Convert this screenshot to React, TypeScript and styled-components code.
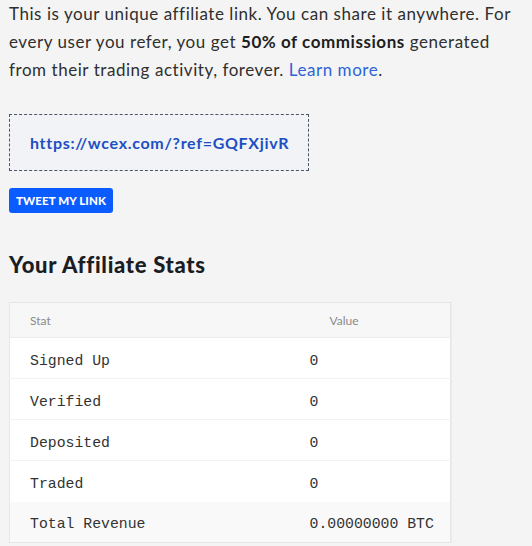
import React from 'react';
import styled, { createGlobalStyle } from 'styled-components';

const GlobalStyle = createGlobalStyle`
  html, body {
    margin: 0;
    padding: 0;
    background: #f4f4f4;
  }
  body {
    font-family: Lato, "Open Sans", sans-serif;
    color: #2b2b2b;
  }
`;

const Page = styled.div`
  padding: 0 9px;
`;

const Intro = styled.p`
  margin: 0;
  font-size: 17px;
  line-height: 28px;
  letter-spacing: 0.55px;
  color: #2f2f2f;

  strong {
    font-weight: 700;
    color: #1e1e1e;
  }
`;

const Learn = styled.a`
  color: #2d63d6;
  text-decoration: none;
`;

const LinkBox = styled.div`
  margin-top: 30px;
  width: 300px;
  height: 57px;
  box-sizing: border-box;
  border: 1px dashed #4a5568;
  background: #f1f3f6;
  display: flex;
  align-items: center;
  padding-left: 20px;
  font-size: 16px;
  letter-spacing: 0.7px;
  font-weight: 700;
  color: #1e4fc2;
`;

const TweetButton = styled.button`
  margin-top: 17px;
  display: block;
  height: 25px;
  width: 104px;
  padding: 0;
  border: none;
  border-radius: 3px;
  background: #0b5cff;
  color: #fff;
  font-family: Lato, sans-serif;
  font-weight: 900;
  font-size: 11.5px;
  letter-spacing: 0.1px;
  text-transform: uppercase;
  cursor: pointer;
`;

const Heading = styled.h2`
  margin: 38px 0 0;
  font-size: 22px;
  line-height: 28px;
  font-weight: 900;
  letter-spacing: 0.7px;
  color: #1a1d24;
`;

const Table = styled.table`
  margin-top: 23px;
  width: 442px;
  table-layout: fixed;
  border-collapse: collapse;
  background: #fff;
  border: 1px solid #e6e6e6;
  box-shadow: 1px 0 0 #ececec;
`;

const HeadCell = styled.th<{ $pad?: number; $w?: number }>`
  box-sizing: border-box;
  width: ${(p) => (p.$w ? `${p.$w}px` : 'auto')};
  height: 35px;
  padding: 0 0 0 ${(p) => p.$pad ?? 20}px;
  text-align: left;
  font-size: 12px;
  font-weight: 400;
  color: #8a8a8a;
  background: #f7f7f7;
  border-bottom: 1px solid #ececec;
`;

const Row = styled.tr<{ $shade?: boolean }>`
  background: ${(p) => (p.$shade ? '#f9f9f9' : '#fff')};
  & + & td {
    border-top: 1px solid #f2f2f2;
  }
`;

const Cell = styled.td`
  box-sizing: border-box;
  height: 41px;
  padding: 5px 0 0 20px;
  font-family: "Liberation Mono", monospace;
  font-size: 14.8px;
  color: #333;
  white-space: nowrap;
`;

const stats = [
  { label: 'Signed Up', value: '0' },
  { label: 'Verified', value: '0' },
  { label: 'Deposited', value: '0' },
  { label: 'Traded', value: '0' },
  { label: 'Total Revenue', value: '0.00000000 BTC' },
];

export default function App() {
  return (
    <Page>
      <GlobalStyle />
      <Intro>
        This is your unique affiliate link. You can share it anywhere. For every user you refer, you get{' '}
        <strong>50% of commissions</strong> generated from their trading activity, forever.{' '}
        <Learn href="#">Learn more</Learn>.
      </Intro>
      <LinkBox>https://wcex.com/?ref=GQFXjivR</LinkBox>
      <TweetButton>Tweet my link</TweetButton>
      <Heading>Your Affiliate Stats</Heading>
      <Table>
        <thead>
          <tr>
            <HeadCell $w={280}>Stat</HeadCell>
            <HeadCell $pad={40}>Value</HeadCell>
          </tr>
        </thead>
        <tbody>
          {stats.map((s, i) => (
            <Row key={s.label} $shade={i === stats.length - 1}>
              <Cell>{s.label}</Cell>
              <Cell>{s.value}</Cell>
            </Row>
          ))}
        </tbody>
      </Table>
    </Page>
  );
}
